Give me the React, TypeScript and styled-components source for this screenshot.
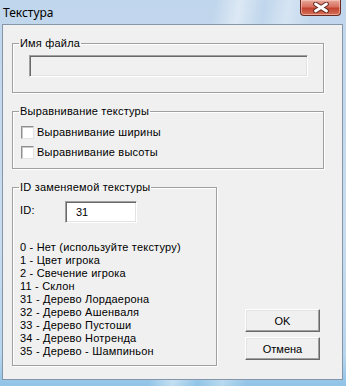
import styled, { createGlobalStyle } from 'styled-components';

const GlobalStyle = createGlobalStyle`
  html, body {
    margin: 0;
    padding: 0;
    background: #c6daee;
  }
`;

const textureIds = [
  '0 - Нет (используйте текстуру)',
  '1 - Цвет игрока',
  '2 - Свечение игрока',
  '11 - Склон',
  '31 - Дерево Лордаерона',
  '32 - Дерево Ашенваля',
  '33 - Дерево Пустоши',
  '34 - Дерево Нотренда',
  '35 - Дерево - Шампиньон',
];

export default function App() {
  return (
    <>
      <GlobalStyle />
      <Frame>
        <TitleBar>
          <Title>Текстура</Title>
          <CloseButton aria-label='Закрыть'>
            <svg width='16' height='11' viewBox='0 0 16 11'>
              <path d='M2.5 2 L13.5 9 M13.5 2 L2.5 9' stroke='#5b2219' strokeWidth='4.6' strokeLinecap='round' />
              <path d='M2.5 2 L13.5 9 M13.5 2 L2.5 9' stroke='#ffffff' strokeWidth='2.8' strokeLinecap='round' />
            </svg>
          </CloseButton>
        </TitleBar>

        <Client>
          <Group>
            <Legend>Имя файла</Legend>
            <FileBody>
              <SunkenInput disabled />
            </FileBody>
          </Group>

          <Group>
            <Legend>Выравнивание текстуры</Legend>
            <CheckBody>
              <CheckRow>
                <CheckBox />
                <span>Выравнивание ширины</span>
              </CheckRow>
              <CheckRow>
                <CheckBox />
                <span>Выравнивание высоты</span>
              </CheckRow>
            </CheckBody>
          </Group>

          <BottomRow>
            <Group $width={205}>
              <Legend>ID заменяемой текстуры</Legend>
              <IdBody>
                <IdRow>
                  <IdLabel>ID:</IdLabel>
                  <SunkenInput $width={72} $white defaultValue='31' />
                </IdRow>
                <IdList>
                  {textureIds.map((line) => (
                    <div key={line}>{line}</div>
                  ))}
                </IdList>
              </IdBody>
            </Group>

            <Buttons>
              <Button>OK</Button>
              <Button>Отмена</Button>
            </Buttons>
          </BottomRow>
        </Client>
      </Frame>
    </>
  );
}

const Frame = styled.div`
  width: 346px;
  height: 386px;
  display: flex;
  flex-direction: column;
  overflow: hidden;
  background:
    linear-gradient(100deg, transparent 52%, rgba(255, 255, 255, 0.45) 58%, transparent 64%, rgba(255, 255, 255, 0.35) 70%, transparent 76%),
    linear-gradient(180deg, #c0d6ec 0%, #c9dcef 60%, #b7d5ee 92%, #8fc3e6 100%);
  font-family: 'Liberation Sans', Arial, sans-serif;
  font-size: 11px;
  letter-spacing: 0.2px;
  color: #000;
`;

const TitleBar = styled.div`
  height: 24px;
  flex: none;
  display: flex;
  align-items: flex-start;
  justify-content: space-between;
  padding: 0 5px 0 3px;
  box-sizing: border-box;
`;

const Title = styled.span`
  font-family: 'Noto Sans', 'Open Sans', sans-serif;
  font-size: 12px;
  letter-spacing: 0;
  line-height: 16px;
  margin-top: 5px;
  color: #000;
`;

const CloseButton = styled.div`
  width: 41px;
  height: 16px;
  box-sizing: border-box;
  border: 1px solid #6a2a22;
  border-top: none;
  border-radius: 0 0 4px 4px;
  background: linear-gradient(180deg, #e9a99b 0%, #d8705f 45%, #c24330 55%, #d57159 100%);
  box-shadow: inset 0 0 0 1px rgba(255, 220, 210, 0.5);
  display: flex;
  align-items: center;
  justify-content: center;
`;

const Client = styled.div`
  flex: 1;
  margin: 0 3px 6px 2px;
  border: 1px solid #8596a8;
  background: #f0f0f0;
  padding: 12px 18px 13px 9px;
  display: flex;
  flex-direction: column;
  gap: 12px;
`;

const Group = styled.fieldset<{ $width?: number }>`
  margin: 0;
  padding: 0;
  min-width: 0;
  width: ${(p) => (p.$width ? `${p.$width}px` : 'auto')};
  box-sizing: border-box;
  border: 1px solid #a0a0a0;
  box-shadow: 1px 1px 0 #fff, inset 1px 1px 0 #fff;
  flex: none;
`;

const Legend = styled.legend`
  margin-left: 6px;
  padding: 0 1px;
  line-height: 13px;
`;

const FileBody = styled.div`
  padding: 5px 15px 15px 16px;
  display: flex;
`;

const SunkenInput = styled.input<{ $width?: number; $white?: boolean }>`
  width: ${(p) => (p.$width ? `${p.$width}px` : '100%')};
  height: 22px;
  box-sizing: border-box;
  margin: 0;
  padding: 2px 10px;
  border: 1px solid;
  border-color: #a0a0a0 #fff #fff #a0a0a0;
  box-shadow: inset 1px 1px 0 #696969, inset -1px -1px 0 #e3e3e3;
  background: ${(p) => (p.$white ? '#fff' : '#f0f0f0')};
  font: inherit;
  color: #000;
  outline: none;
`;

const CheckBody = styled.div`
  padding: 4px 8px 6px 8px;
  display: flex;
  flex-direction: column;
`;

const CheckRow = styled.label`
  height: 20px;
  display: flex;
  align-items: center;
  gap: 3px;
`;

const CheckBox = styled.span`
  width: 13px;
  height: 13px;
  box-sizing: border-box;
  border: 1px solid;
  border-color: #8f8f8f #e3e3e3 #e3e3e3 #8f8f8f;
  box-shadow: inset 1px 1px 0 #c8c8c8;
  background: #fff;
  flex: none;
`;

const BottomRow = styled.div`
  display: flex;
  align-items: flex-end;
`;

const IdBody = styled.div`
  padding: 7px;
`;

const IdRow = styled.div`
  display: flex;
  align-items: center;
`;

const IdLabel = styled.span`
  width: 45px;
  margin-top: -4px;
`;

const IdList = styled.div`
  margin-top: 18px;
  line-height: 13px;
`;

const Buttons = styled.div`
  margin: 0 0 6px 28px;
  display: flex;
  flex-direction: column;
  gap: 5px;
`;

const Button = styled.button`
  width: 75px;
  height: 23px;
  margin: 0;
  padding: 0;
  box-sizing: border-box;
  border: 1px solid;
  border-color: #fff #696969 #696969 #fff;
  box-shadow: inset -1px -1px 0 #a0a0a0, inset 1px 1px 0 #e3e3e3;
  background: #f0f0f0;
  font: inherit;
  color: #000;
`;
